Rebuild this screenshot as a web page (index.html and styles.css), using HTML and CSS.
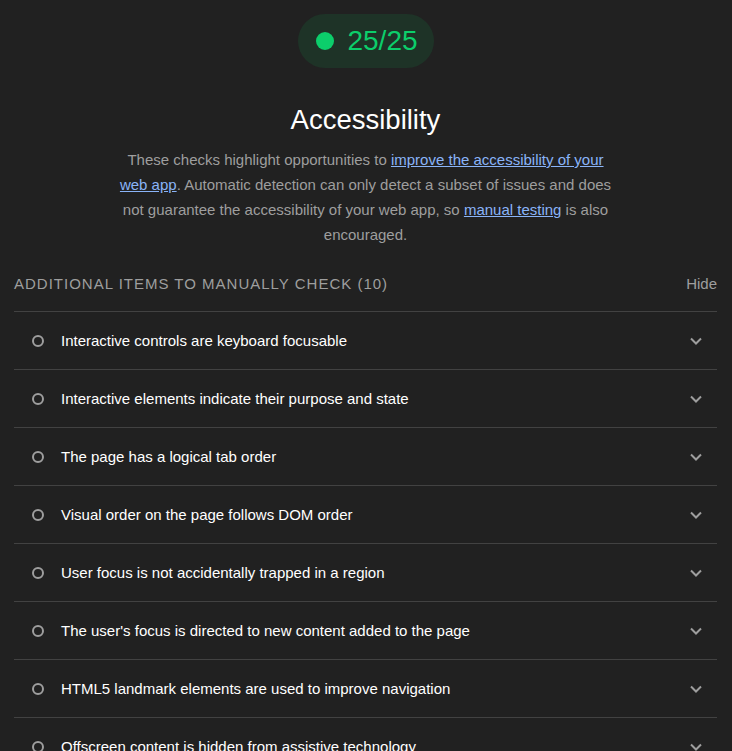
FILE: index.html
```html
<!DOCTYPE html>
<html lang="en">
<head>
<meta charset="utf-8">
<title>Accessibility</title>
<link rel="stylesheet" href="styles.css">
</head>
<body>
<div class="page">
  <div class="score-wrap">
    <div class="score"><span class="dot"></span><span class="score-text">25/25</span></div>
  </div>
  <h1 class="title">Accessibility</h1>
  <p class="desc">These checks highlight opportunities to <a href="#">improve the accessibility of your web app</a>. Automatic detection can only detect a subset of issues and does not guarantee the accessibility of your web app, so <a href="#">manual testing</a> is also encouraged.</p>
  <div class="group-head">
    <span class="group-title">ADDITIONAL ITEMS TO MANUALLY CHECK (10)</span>
    <span class="hide">Hide</span>
  </div>
  <ul class="audits">
    <li class="audit"><span class="ring"></span><span class="label">Interactive controls are keyboard focusable</span><svg class="chev" viewBox="0 0 12 8"><path d="M1 1.5l5 5 5-5"/></svg></li>
    <li class="audit"><span class="ring"></span><span class="label">Interactive elements indicate their purpose and state</span><svg class="chev" viewBox="0 0 12 8"><path d="M1 1.5l5 5 5-5"/></svg></li>
    <li class="audit"><span class="ring"></span><span class="label">The page has a logical tab order</span><svg class="chev" viewBox="0 0 12 8"><path d="M1 1.5l5 5 5-5"/></svg></li>
    <li class="audit"><span class="ring"></span><span class="label">Visual order on the page follows DOM order</span><svg class="chev" viewBox="0 0 12 8"><path d="M1 1.5l5 5 5-5"/></svg></li>
    <li class="audit"><span class="ring"></span><span class="label">User focus is not accidentally trapped in a region</span><svg class="chev" viewBox="0 0 12 8"><path d="M1 1.5l5 5 5-5"/></svg></li>
    <li class="audit"><span class="ring"></span><span class="label">The user's focus is directed to new content added to the page</span><svg class="chev" viewBox="0 0 12 8"><path d="M1 1.5l5 5 5-5"/></svg></li>
    <li class="audit"><span class="ring"></span><span class="label">HTML5 landmark elements are used to improve navigation</span><svg class="chev" viewBox="0 0 12 8"><path d="M1 1.5l5 5 5-5"/></svg></li>
    <li class="audit"><span class="ring"></span><span class="label">Offscreen content is hidden from assistive technology</span><svg class="chev" viewBox="0 0 12 8"><path d="M1 1.5l5 5 5-5"/></svg></li>
    <li class="audit"><span class="ring"></span><span class="label">Custom controls have associated labels</span><svg class="chev" viewBox="0 0 12 8"><path d="M1 1.5l5 5 5-5"/></svg></li>
    <li class="audit"><span class="ring"></span><span class="label">Custom controls have ARIA roles</span><svg class="chev" viewBox="0 0 12 8"><path d="M1 1.5l5 5 5-5"/></svg></li>
  </ul>
</div>
</body>
</html>
```

FILE: styles.css
```css
html, body {
  margin: 0;
  padding: 0;
  background: #212121;
}
body {
  font-family: "Liberation Sans", Arial, sans-serif;
  color: #fff;
}
.page {
  padding: 14px 15px 0 14px;
}
.score-wrap {
  display: flex;
  justify-content: center;
}
.score {
  display: flex;
  align-items: center;
  gap: 13px;
  height: 54px;
  padding: 0 16px 0 18px;
  border-radius: 27px;
  background: #1e3327;
  margin-left: 1px;
}
.dot {
  width: 18px;
  height: 18px;
  border-radius: 50%;
  background: #0cce6b;
}
.score-text {
  font-size: 28px;
  color: #0cce6b;
  line-height: 1;
}
.title {
  margin: 36px 0 0;
  text-align: center;
  font-size: 27.5px;
  font-weight: normal;
  line-height: 32px;
  color: #fff;
}
.desc {
  margin: 11px auto 0;
  width: 500px;
  text-align: center;
  font-size: 15px;
  line-height: 25px;
  color: #9e9e9e;
}
.desc a {
  color: #8ab4f8;
}
.group-head {
  display: flex;
  justify-content: space-between;
  align-items: center;
  margin-top: 28px;
  padding-bottom: 19px;
  border-bottom: 1px solid #424242;
}
.group-title {
  font-size: 15px;
  letter-spacing: 1px;
  color: #9e9e9e;
}
.hide {
  font-size: 15px;
  color: #9e9e9e;
}
.audits {
  list-style: none;
  margin: 0;
  padding: 0;
}
.audit {
  display: flex;
  align-items: center;
  height: 57px;
  border-bottom: 1px solid #424242;
}
.ring {
  width: 8px;
  height: 8px;
  border: 2px solid #9e9e9e;
  border-radius: 50%;
  margin-left: 18px;
  margin-right: 17px;
  flex: none;
}
.label {
  flex: 1;
  font-size: 15px;
  color: #fff;
}
.chev {
  width: 12px;
  height: 8px;
  margin-right: 15px;
  fill: none;
  stroke: #9e9e9e;
  stroke-width: 2;
}
```
